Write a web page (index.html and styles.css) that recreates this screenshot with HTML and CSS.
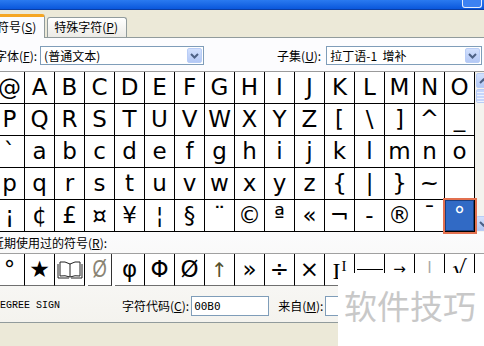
FILE: index.html
```html
<!DOCTYPE html>
<html lang="zh-CN">
<head>
    <meta charset="UTF-8">
    <meta name="viewport" content="width=device-width, initial-scale=1.0">
    <title>符号</title>
    <link rel="stylesheet" href="styles.css">
</head>
<body>

    <div class="titlebar"><span class="help-btn"></span></div>

    <div class="tabs">
        <div class="tab active">符号(<u>S</u>)</div>
        <div class="tab">特殊字符(<u>P</u>)</div>
    </div>

    <div class="panel">
        <div class="font-row">
            <span class="font-label">字体(<u>F</u>):</span>
            <div class="select font-select">
                <span class="select-text">(普通文本)</span>
                <span class="drop"><svg width="9" height="6" viewBox="0 0 9 6"><path d="M1 1 L4.5 4.5 L8 1" fill="none" stroke="#4d6185" stroke-width="2"/></svg></span>
            </div>
            <span class="subset-label">子集(<u>U</u>):</span>
            <div class="select subset-select">
                <span class="select-text">拉丁语-1&nbsp;&nbsp;增补</span>
                <span class="drop"><svg width="9" height="6" viewBox="0 0 9 6"><path d="M1 1 L4.5 4.5 L8 1" fill="none" stroke="#4d6185" stroke-width="2"/></svg></span>
            </div>
        </div>

        <div class="grid-wrap">
            <div class="grid">
                <span class="cell">@</span><span class="cell">A</span><span class="cell">B</span><span class="cell">C</span>
                <span class="cell">D</span><span class="cell">E</span><span class="cell">F</span><span class="cell">G</span>
                <span class="cell">H</span><span class="cell">I</span><span class="cell">J</span><span class="cell">K</span>
                <span class="cell">L</span><span class="cell">M</span><span class="cell">N</span><span class="cell">O</span>

                <span class="cell">P</span><span class="cell">Q</span><span class="cell">R</span><span class="cell">S</span>
                <span class="cell">T</span><span class="cell">U</span><span class="cell">V</span><span class="cell">W</span>
                <span class="cell">X</span><span class="cell">Y</span><span class="cell">Z</span><span class="cell">[</span>
                <span class="cell">\</span><span class="cell">]</span><span class="cell">^</span><span class="cell">_</span>

                <span class="cell">`</span><span class="cell">a</span><span class="cell">b</span><span class="cell">c</span>
                <span class="cell">d</span><span class="cell">e</span><span class="cell">f</span><span class="cell">g</span>
                <span class="cell">h</span><span class="cell">i</span><span class="cell">j</span><span class="cell">k</span>
                <span class="cell">l</span><span class="cell">m</span><span class="cell">n</span><span class="cell">o</span>

                <span class="cell">p</span><span class="cell">q</span><span class="cell">r</span><span class="cell">s</span>
                <span class="cell">t</span><span class="cell">u</span><span class="cell">v</span><span class="cell">w</span>
                <span class="cell">x</span><span class="cell">y</span><span class="cell">z</span><span class="cell">{</span>
                <span class="cell">|</span><span class="cell">}</span><span class="cell">~</span><span class="cell"></span>

                <span class="cell">¡</span><span class="cell">¢</span><span class="cell">£</span><span class="cell">¤</span>
                <span class="cell">¥</span><span class="cell">¦</span><span class="cell">§</span><span class="cell">¨</span>
                <span class="cell">©</span><span class="cell">ª</span><span class="cell">«</span><span class="cell">¬</span>
                <span class="cell">-</span><span class="cell">®</span><span class="cell">¯</span><span class="cell selected">°</span>
            </div>
            <div class="scrollbar">
                <span class="sb-btn"><svg width="9" height="6" viewBox="0 0 9 6"><path d="M1 5 L4.5 1.5 L8 5" fill="none" stroke="#4d6185" stroke-width="2"/></svg></span>
                <span class="sb-thumb"></span>
                <span class="sb-track"></span>
                <span class="sb-btn"><svg width="9" height="6" viewBox="0 0 9 6"><path d="M1 1 L4.5 4.5 L8 1" fill="none" stroke="#4d6185" stroke-width="2"/></svg></span>
            </div>
        </div>

        <div class="recent-label">近期使用过的符号(<u>R</u>):</div>

        <div class="recent">
            <span class="cell">°</span>
            <span class="cell">★</span>
            <span class="cell"><svg width="26" height="20" viewBox="0 0 26 20"><path d="M1 4 L1 18 L12 18 M25 4 L25 18 L14 18 M3 16 L3 2 Q8 1 13 4 Q18 1 23 2 L23 16 Q18 15 13 17 Q8 15 3 16 Z M13 4 L13 17" fill="none" stroke="#222" stroke-width="1"/></svg></span>
            <span class="cell thin">Ø</span>
            <span class="cell">φ</span>
            <span class="cell">Φ</span>
            <span class="cell">Ø</span>
            <span class="cell arrow-up">↑</span>
            <span class="cell">»</span>
            <span class="cell">÷</span>
            <span class="cell">×</span>
            <span class="cell serif"><span class="big-i">I</span><span class="small-i">I</span></span>
            <span class="cell"><span class="dash"></span></span>
            <span class="cell small-arrow">→</span>
            <span class="cell faint">⊥</span>
            <span class="cell">√</span>
        </div>

        <div class="info-row">
            <span class="char-name">DEGREE SIGN</span>
            <span>字符代码(<u>C</u>):</span>
            <span class="textbox code-box">00B0</span>
            <span class="from-label">来自(<u>M</u>):</span>
            <span class="textbox from-box"></span>
        </div>
    </div>

    <div class="watermark">软件技巧</div>

</body>
</html>
```

FILE: styles.css
```css
* {
    box-sizing: border-box;
}
body {
    margin: 0;
    width: 484px;
    height: 346px;
    overflow: hidden;
    position: relative;
    background-color: #ece9d8;
    font-family: "Noto Sans CJK SC", sans-serif;
    font-size: 12px;
    color: #000;
}
u {
    text-decoration: underline;
}

/* title bar */
.titlebar {
    height: 10px;
    background: linear-gradient(#2a7af0, #0a57dc);
    border-bottom: 1px solid #0a3ea6;
    display: flex;
    justify-content: flex-end;
    padding-right: 2px;
}
.help-btn {
    width: 20px;
    height: 8px;
    border: 1px solid #e8eefc;
    border-top: none;
    border-radius: 0 0 3px 3px;
    background-color: #3d82f2;
}

/* tabs */
.tabs {
    height: 27px;
    display: flex;
    align-items: flex-end;
    position: relative;
    z-index: 1;
}
.tab {
    height: 20px;
    line-height: 18px;
    padding: 0 8px 0 6px;
    border: 1px solid #919b9c;
    border-bottom: none;
    border-radius: 3px 3px 0 0;
    background: linear-gradient(#fff, #ecebe6);
    margin-left: 2px;
    white-space: nowrap;
}
.tab.active {
    height: 24px;
    margin-left: -10px;
    margin-bottom: -1px;
    padding: 0 8px 0 6px;
    line-height: 20px;
    border-top: 3px solid #f5a623;
    background: #fcfcfe;
}

/* panel */
.panel {
    height: 286px;
    border-top: 1px solid #919b9c;
    border-bottom: 1px solid #919b9c;
    background: linear-gradient(#fcfcfe 65%, #f4f3ee);
    padding-top: 8px;
}
.font-row {
    height: 19px;
    display: flex;
    align-items: center;
    white-space: nowrap;
}
.font-label {
    margin-left: -5px;
}
.select {
    height: 19px;
    border: 1px solid #7f9db9;
    background-color: #fff;
    display: flex;
    align-items: center;
    justify-content: space-between;
    padding: 1px 1px 1px 3px;
    flex: none;
}
.font-select {
    margin-left: 3px;
    width: 164px;
}
.subset-label {
    margin-left: 73px;
}
.subset-select {
    margin-left: 5px;
    width: 156px;
}
.drop {
    width: 15px;
    height: 15px;
    border: 1px solid #b9cdf6;
    border-radius: 2px;
    background: linear-gradient(#d2e0fd, #b3c8f5);
    display: flex;
    align-items: center;
    justify-content: center;
}

/* character grid */
.grid-wrap {
    display: flex;
    margin-left: -5px;
    margin-top: 6px;
    height: 161px;
}
.grid {
    display: grid;
    grid-template-columns: repeat(16, 30px);
    grid-auto-rows: 32px;
    border-top: 1px solid #9a9a9a;
    background-color: #fff;
}
.cell {
    border-right: 1px solid #000;
    border-bottom: 1px solid #000;
    display: flex;
    align-items: center;
    justify-content: center;
    font-family: "DejaVu Sans", sans-serif;
    font-size: 23px;
    line-height: 1;
}
.cell.selected {
    background-color: #316ac5;
    color: #fff;
    align-items: flex-start;
    padding-top: 4px;
    outline: 2px solid #e2704f;
    outline-offset: 0;
    box-shadow: inset 0 0 0 1px #1b3f80;
    position: relative;
}
.scrollbar {
    width: 17px;
    display: flex;
    flex-direction: column;
    background-color: #f4f3ee;
    border-top: 1px solid #9a9a9a;
    flex: none;
}
.sb-btn {
    height: 15px;
    margin: 1px;
    border: 1px solid #b9cdf6;
    border-radius: 2px;
    background: linear-gradient(#d2e0fd, #b3c8f5);
    display: flex;
    align-items: center;
    justify-content: center;
}
.sb-thumb {
    height: 14px;
    margin: 0 1px;
    border: 1px solid #b9cdf6;
    border-radius: 2px;
    background: repeating-linear-gradient(#c6d6fc 0 2px, #eef3fe 2px 3px);
}
.sb-track {
    flex: 1;
}

/* recently used */
.recent-label {
    height: 21px;
    padding-top: 4px;
    line-height: 13px;
    margin-left: -8px;
    white-space: nowrap;
}
.recent {
    display: grid;
    grid-template-columns: repeat(16, 30px);
    grid-auto-rows: 32px;
    margin-left: -5px;
    border-top: 1px solid #a0a0a0;
    background-color: #fff;
}
.recent .cell {
    border-bottom-color: #6f6f6f;
}
.thin {
    color: #8a8474;
    font-family: "Liberation Sans", sans-serif;
    font-weight: 200;
    transform: scaleX(0.8);
}
.arrow-up {
    color: #55502c;
    font-size: 20px;
}
.serif {
    font-family: "Liberation Serif", serif;
    align-items: flex-start;
    padding-top: 5px;
}
.big-i {
    font-size: 24px;
}
.small-i {
    font-size: 15px;
    margin-left: 1px;
}
.dash {
    width: 26px;
    height: 1px;
    background-color: #000;
}
.small-arrow {
    font-size: 15px;
}
.faint {
    color: #a8a8a8;
}

/* character info */
.info-row {
    height: 36px;
    padding-top: 10px;
    display: flex;
    align-items: flex-start;
    white-space: nowrap;
}
.char-name {
    width: 128px;
    margin-left: -6px;
    font-family: "Liberation Mono", monospace;
    font-size: 10px;
    line-height: 20px;
}
.info-row > span {
    line-height: 20px;
}
.textbox {
    height: 20px;
    border: 1px solid #7f9db9;
    background-color: #fff;
    padding-left: 2px;
    flex: none;
}
.code-box {
    width: 78px;
    margin-left: 2px;
    font-family: "DejaVu Sans Mono", monospace;
    font-size: 11px;
}
.from-label {
    margin-left: 9px;
}
.from-box {
    width: 80px;
    margin-left: 2px;
}

/* watermark overlay */
.watermark {
    position: absolute;
    left: 338px;
    top: 273px;
    width: 146px;
    height: 73px;
    background-color: #fff;
    color: #c8c8c8;
    font-size: 33px;
    line-height: 33px;
    padding: 16px 0 0 6px;
    letter-spacing: 0;
    white-space: nowrap;
}
```
